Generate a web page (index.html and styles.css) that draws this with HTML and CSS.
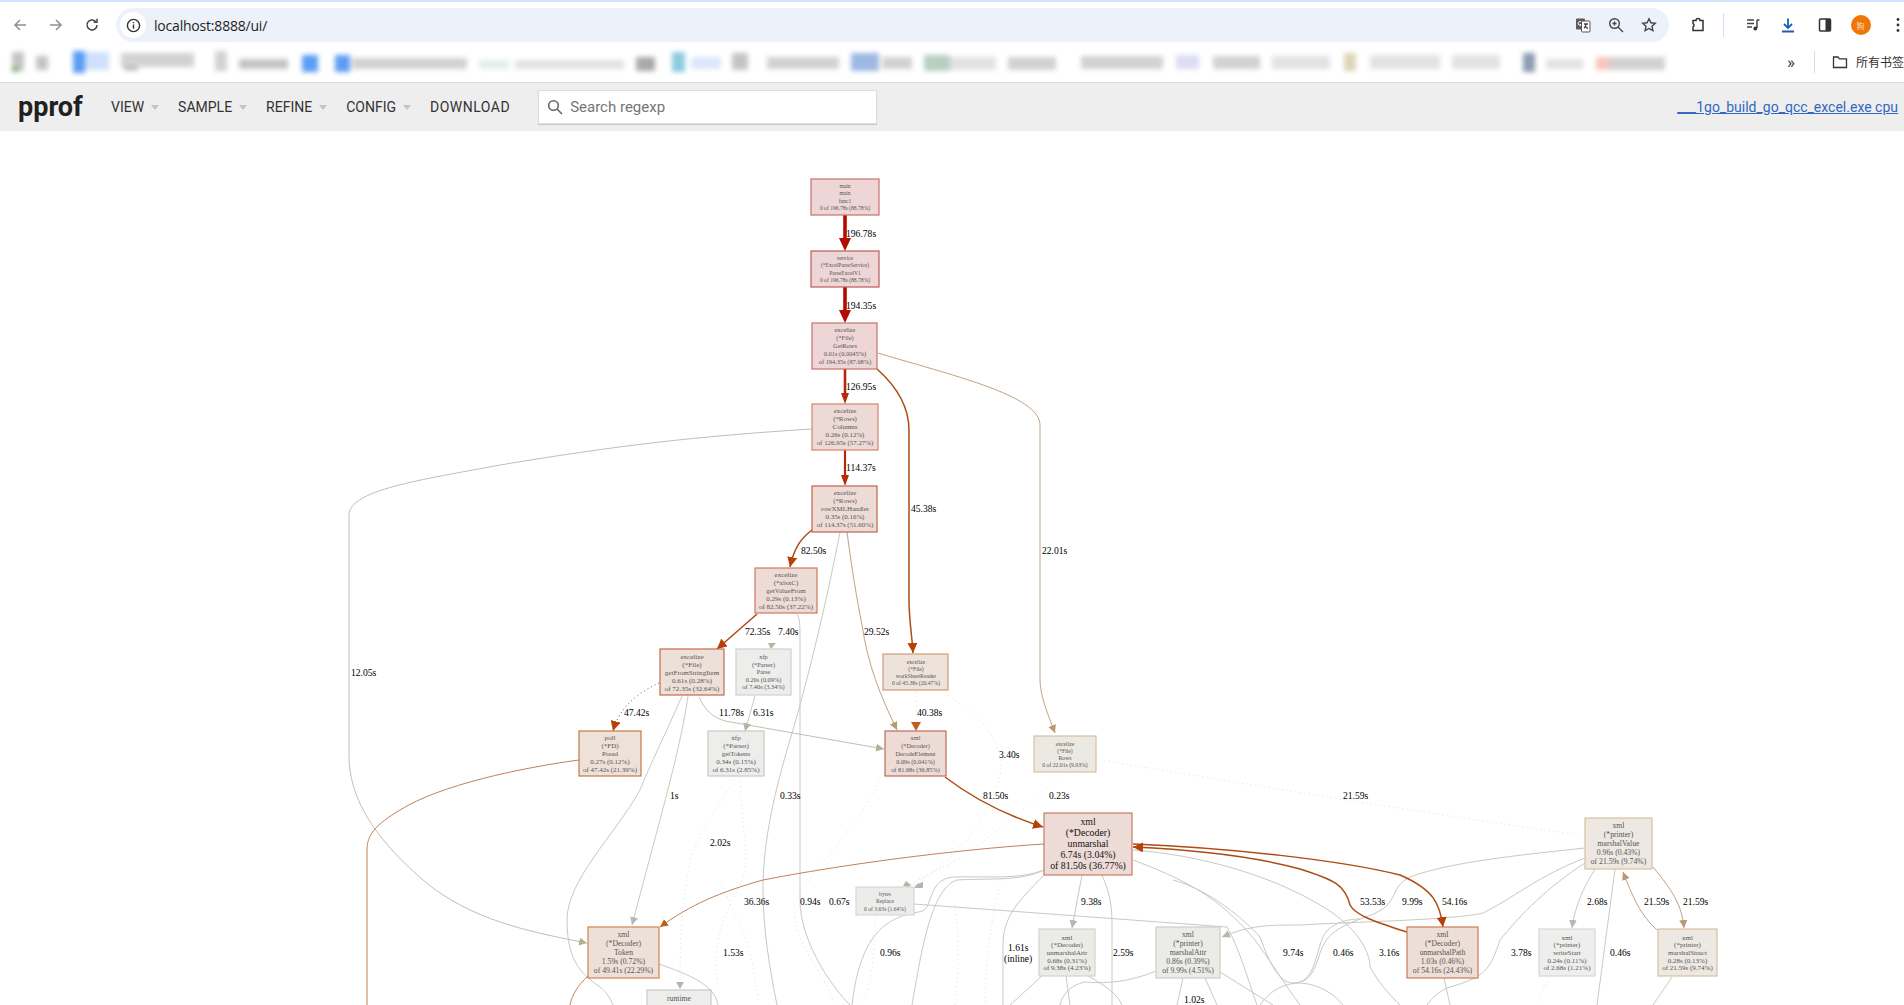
FILE: index.html
```html
<!DOCTYPE html>
<html lang="en">
<head>
<meta charset="utf-8">
<title>pprof</title>
<link rel="stylesheet" href="styles.css">
</head>
<body>
<div class="tabstrip"></div>
<div class="toolbar">
  <svg class="tb-icon dim" viewBox="0 0 16 16"><path d="M14 8H3M8 3 3 8l5 5"/></svg>
  <svg class="tb-icon dim" viewBox="0 0 16 16"><path d="M2 8h11M8 3l5 5-5 5"/></svg>
  <svg class="tb-icon" viewBox="0 0 16 16"><path d="M13 8a5 5 0 1 1-1.5-3.6M13 1.800v3.400H9.600"/></svg>
  <div class="omnibox">
    <span class="site-chip"><svg class="info" viewBox="0 0 16 16"><circle cx="8" cy="8" r="6.500"/><path d="M8 7v4.500M8 4.200v1.400"/></svg></span>
    <span class="url">localhost:8888/ui/</span>
    <span class="omni-actions">
      <svg class="omni-icon" viewBox="0 0 16 16"><rect class="solid" x="1" y="1.500" width="9" height="11" rx="1"/><path class="wh" d="M6.500 5a2 2 0 1 0 .4 2.500H5"/><rect class="outline" x="6.500" y="4" width="8.500" height="11" rx="1"/><path d="M9 7h4M11 7c0 2-1 3.500-2 4M10 9c.6 1 1.600 1.800 3 2.500"/></svg>
      <svg class="omni-icon" viewBox="0 0 16 16"><circle cx="6.500" cy="6.500" r="4.800"/><path d="m10 10 5 5M4.500 6.500h4M6.500 4.500v4"/></svg>
      <svg class="omni-icon" viewBox="0 0 16 16"><path d="m8 1.800 1.900 4 4.400.5-3.300 3 .9 4.400L8 11.500l-3.900 2.200.9-4.400-3.300-3 4.400-.5z"/></svg>
    </span>
  </div>
  <div class="tb-right">
    <svg class="tb-icon ext" viewBox="0 0 16 16"><path d="M3 3.500h3a2 2 0 0 1 4 0h3v10H3v-3.500a2 2 0 0 0 0-3.500z"/></svg>
    <span class="tb-divider"></span>
    <svg class="tb-icon media" viewBox="0 0 16 16"><path d="M2 3h7M2 6.500h7M2 10h5"/><path d="M12 3v8"/><circle class="solid" cx="10.300" cy="11.500" r="1.900"/><path d="M12 3h2.500"/></svg>
    <svg class="tb-icon dl" viewBox="0 0 16 16"><path d="M8 1.500v9M4 7l4 4 4-4M2 14.500h12"/></svg>
    <svg class="tb-icon panel" viewBox="0 0 16 16"><rect x="2.500" y="2" width="11" height="12" rx="1"/><rect class="solid" x="8.500" y="2" width="5" height="12"/></svg>
    <span class="avatar">狗</span>
    <svg class="tb-icon kebab" viewBox="0 0 16 16"><circle class="solid" cx="8" cy="2.500" r="1.400"/><circle class="solid" cx="8" cy="8" r="1.400"/><circle class="solid" cx="8" cy="13.500" r="1.400"/></svg>
  </div>
</div>
<div class="bookmarks">
  <svg class="bm-blur" viewBox="0 0 1680 30" aria-hidden="true">
    <g class="bm-filter">
      <rect class="g2" x="12" y="5" width="12" height="19"/><rect class="gn" x="12" y="20" width="6" height="5"/>
      <rect class="g2" x="36" y="9" width="12" height="14"/>
      <rect class="b1" x="73" y="4" width="12" height="22"/><rect class="b2" x="85" y="5" width="24" height="18"/>
      <rect class="g3" x="121" y="6" width="73" height="14"/><rect class="g1" x="124" y="20" width="14" height="3"/>
      <rect class="g3" x="215" y="4" width="12" height="20"/><rect class="g2" x="239" y="12" width="49" height="10"/>
      <rect class="b1" x="302" y="8" width="16" height="17"/><rect class="b1" x="335" y="8" width="15" height="17"/>
      <rect class="g3" x="352" y="11" width="115" height="11"/>
      <rect class="gp" x="479" y="13" width="30" height="9"/><rect class="g4" x="515" y="13" width="109" height="9"/>
      <rect class="g1" x="636" y="10" width="19" height="14"/>
      <rect class="tl" x="672" y="5" width="13" height="20"/><rect class="b3" x="691" y="10" width="30" height="12"/>
      <rect class="g2" x="732" y="6" width="16" height="17"/><rect class="g3" x="767" y="10" width="72" height="12"/>
      <rect class="bg" x="851" y="6" width="28" height="18"/><rect class="g3" x="882" y="10" width="30" height="12"/>
      <rect class="gs" x="924" y="8" width="26" height="16"/><rect class="g4" x="950" y="10" width="46" height="13"/>
      <rect class="g3" x="1008" y="10" width="48" height="13"/><rect class="g3" x="1081" y="9" width="82" height="13"/>
      <rect class="lv" x="1176" y="8" width="23" height="14"/><rect class="g3" x="1213" y="9" width="47" height="13"/>
      <rect class="g4" x="1272" y="9" width="58" height="13"/><rect class="bge" x="1344" y="6" width="12" height="18"/>
      <rect class="g4" x="1370" y="8" width="70" height="14"/><rect class="g4" x="1452" y="8" width="48" height="14"/>
      <rect class="bd" x="1523" y="6" width="12" height="19"/><rect class="g4" x="1546" y="12" width="37" height="10"/>
      <rect class="pk" x="1596" y="10" width="14" height="13"/><rect class="g3" x="1610" y="10" width="55" height="13"/>
    </g>
  </svg>
  <span class="chev">»</span>
  <span class="tb-divider"></span>
  <svg class="folder" viewBox="0 0 16 16"><path d="M1.500 3h4.500l1.500 1.800h7v8.700h-13z"/></svg>
  <span class="all-bm">所有书签</span>
</div>
<header class="pp-header">
  <span class="brand">pprof</span>
  <nav class="pp-nav">
    <span class="menu">VIEW<i class="caret"></i></span>
    <span class="menu">SAMPLE<i class="caret"></i></span>
    <span class="menu">REFINE<i class="caret"></i></span>
    <span class="menu">CONFIG<i class="caret"></i></span>
    <span class="menu wide">DOWNLOAD</span>
  </nav>
  <div class="search">
    <svg class="search-icon" viewBox="0 0 16 16"><circle cx="6.500" cy="6.500" r="4.800"/><path d="m10 10 5 5"/></svg>
    <span class="search-ph">Search regexp</span>
  </div>
  <a class="title-link">___1go_build_go_qcc_excel.exe cpu</a>
</header>
<main class="graph">
<svg class="graph-svg" viewBox="0 131 1904 874">
  <defs>
    <marker id="a-brown" markerUnits="userSpaceOnUse" markerWidth="11" markerHeight="10" refX="10" refY="5" orient="auto"><path class="mk-brown" d="M0 0 10 5 0 10z"/></marker>
    <marker id="a-orange" markerUnits="userSpaceOnUse" markerWidth="9" markerHeight="9" refX="8" refY="4" orient="auto"><path class="mk-orange" d="M0 0 8 4 0 8z"/></marker>
    <marker id="a-tan" markerUnits="userSpaceOnUse" markerWidth="9" markerHeight="9" refX="8" refY="4" orient="auto"><path class="mk-tan" d="M0 0 8 4 0 8z"/></marker>
    <marker id="a-khaki" markerUnits="userSpaceOnUse" markerWidth="9" markerHeight="9" refX="8" refY="4" orient="auto"><path class="mk-khaki" d="M0 0 8 4 0 8z"/></marker>
    <marker id="a-grey" markerUnits="userSpaceOnUse" markerWidth="9" markerHeight="9" refX="8" refY="4" orient="auto"><path class="mk-grey" d="M0 0 8 4 0 8z"/></marker>
  </defs>

  <!-- faint dotted edges -->
  <g class="e dots">
    <path d="M1100,760 C1250,785 1420,812 1578,835"/>
    <path d="M740,777 C742,830 750,860 743,877 C735,900 722,910 717,950 C715,965 716,975 718,985"/>
    <path d="M735,780 C715,810 695,840 690,863 C682,900 680,940 680,982"/>
    <path d="M948,695 C985,720 1005,745 1000,775 C990,830 930,880 905,888"/>
    <path d="M880,777 C860,830 800,880 795,905 C790,940 820,965 835,1005"/>
    <path d="M1060,775 C1030,805 1000,830 960,858 C930,875 915,880 910,886"/>
    <path d="M758,1000 C755,975 750,940 735,915 C730,905 725,890 720,880"/>
    <path d="M1550,977 C1545,985 1540,995 1537,1005"/>
    <path d="M880,895 C870,935 880,970 860,1005"/>
    <path d="M1000,885 C990,925 985,965 985,1005"/>
    <path d="M955,905 C960,940 958,975 955,1005"/>
    <path d="M916,692 V722"/>
  </g>

  <!-- grey edges -->
  <g class="e grey">
    <path d="M840,532 C825,610 805,690 790,740 C775,790 763,840 763,890 C763,930 770,970 777,1005"/>
    <path d="M797,614 C800,620 800,625 800,640 V900 C800,940 830,985 850,1005"/>
    <path d="M682,696 C665,735 650,765 640,790 C615,835 567,880 567,920 C567,965 585,975 597,985 C605,990 610,997 613,1005"/>
    <path marker-end="url(#a-grey)" d="M688,696 C680,750 665,800 632,925"/>
    <path d="M659,964 C690,975 715,985 718,1005"/>
    <path d="M1044,870 C1020,880 985,876 953,877 C925,880 935,912 918,912 C885,918 860,935 852,1005"/>
    <path d="M1044,870 C1020,882 985,878 957,880 C930,888 920,960 912,1005"/>
    <path d="M1044,875 C1020,900 1003,915 1003,945 V1005"/>
    <path d="M1102,875 C1108,890 1112,900 1112,925 V1005"/>
    <path d="M914,904 L1227,927 C1240,950 1248,980 1257,1005"/>
    <path d="M1133,860 C1200,885 1225,905 1255,940 C1270,960 1285,985 1300,1005"/>
    <path d="M1133,850 C1200,855 1270,875 1320,905 C1355,925 1370,950 1370,967 C1380,985 1390,995 1400,1005"/>
    <path d="M1173,880 C1210,890 1245,920 1260,937 C1270,965 1280,983 1293,983 C1315,983 1315,955 1323,937 C1330,922 1350,919 1360,919"/>
    <path d="M1585,848 C1520,855 1450,862 1410,877 C1385,890 1405,905 1360,919 C1330,930 1325,940 1320,953 C1315,970 1310,980 1300,982"/>
    <path marker-end="url(#a-grey)" d="M1585,858 C1540,875 1510,900 1483,913 C1455,920 1350,922 1300,925 C1270,925 1250,925 1222,937"/>
    <path d="M1585,863 C1550,885 1520,915 1500,940 C1490,970 1485,977 1450,987 C1440,990 1432,998 1427,1005"/>
    <path d="M1615,869 L1597,1005"/>
    <path marker-end="url(#a-grey)" d="M1595,869 C1585,885 1575,905 1572,928"/>
    <path d="M1672,977 L1653,1005"/>
    <path d="M1444,978 L1450,1005"/>
    <path d="M1042,976 L1010,1005"/>
    <path d="M1066,976 L1070,1005"/>
    <path d="M1088,976 C1105,985 1118,995 1122,1005"/>
    <path d="M1156,971 C1130,982 1105,984 1085,982 C1070,985 1062,995 1060,1005"/>
    <path d="M1183,978 L1177,1005"/>
    <path d="M1205,978 L1217,1005"/>
    <path d="M1220,972 L1273,1005"/>
    <path d="M1260,1005 C1270,990 1285,983 1300,983 C1320,984 1335,995 1343,1005"/>
    <path marker-end="url(#a-grey)" d="M1082,875 L1072,928"/>
    <path marker-end="url(#a-khaki)" d="M755,696 L745,731"/>
  </g>

  <!-- tan edges -->
  <g class="e khaki">
    <path marker-end="url(#a-khaki)" d="M812,429 C700,436 620,445 500,465 C420,480 349,490 349,515 V755 C349,790 365,830 423,880 C470,920 530,932 587,943"/>
    <path marker-end="url(#a-khaki)" d="M699,697 C705,710 712,717 725,721 L884,749"/>
  </g>
  <g class="e tan">
    <path marker-end="url(#a-tan)" d="M878,353 C950,375 1040,395 1040,425 V680 C1040,695 1048,715 1055,733"/>
    <path marker-end="url(#a-tan)" d="M847,532 C852,570 857,600 862,625 C868,665 880,695 897,730"/>
    <path marker-end="url(#a-tan)" d="M1657,930 C1640,915 1632,895 1623,872"/>
    <path marker-end="url(#a-tan)" d="M1653,867 C1672,890 1682,905 1684,928"/>
  </g>
  <g class="e copper">
    <path d="M579,760 C520,768 440,785 400,810 C375,825 367,835 367,850 V1005"/>
    <path d="M588,976 C578,985 572,995 570,1005"/>
    <path marker-end="url(#a-orange)" d="M1044,844 C950,850 840,865 763,880 C720,892 690,905 660,927"/>
  </g>

  <!-- strong edges -->
  <g class="e brown">
    <path marker-end="url(#a-brown)" d="M812,530 C800,539 794,549 790,567"/>
    <path marker-end="url(#a-brown)" d="M757,614 L717,649"/>
    <path marker-end="url(#a-brown)" d="M877,369 C895,385 909,405 909,430 V600 C909,620 912,635 913,653"/>
    <path marker-end="url(#a-brown)" d="M945,777 C975,800 1005,815 1043,827"/>
    <path marker-end="url(#a-brown)" d="M1133,844 C1230,848 1340,860 1400,875 C1435,890 1440,905 1443,927"/>
    <path marker-end="url(#a-brown)" d="M1407,932 C1375,922 1355,915 1350,905 C1345,885 1335,880 1300,869 C1260,858 1200,850 1133,847"/>
  </g>
  <g class="e brown-dots">
    <path marker-end="url(#a-brown)" d="M659,683 C640,692 620,705 613,731"/>
  </g>

  <path class="e-thick" d="M845,215 V239"/><polygon class="ah-red" points="839,238 851,238 845,251"/>
  <path class="e-thick" d="M845,287 V311"/><polygon class="ah-red" points="839,310 851,310 845,323"/>
  <path class="e-mid" d="M845,369 V394"/><polygon class="ah-red2" points="841,393 849,393 845,404"/>
  <path class="e-mid2" d="M845,450 V476"/><polygon class="ah-red2" points="841,475 849,475 845,486"/>
  <polygon class="ah-orange" points="911,722 921,722 916,731"/>
  <polygon class="ah-khaki" points="768,643 776,643 771,649"/>
  <polygon class="ah-grey" points="676,982 684,982 680,989"/>
  <polygon class="ah-grey" points="906,881 911,885 908,887 903,886"/>
  <polygon class="ah-grey" points="917,884 923,882 923,888 914,888"/>

  <!-- nodes -->
  <g class="node">
    <rect class="c-r1" x="811" y="179" width="68" height="36"/>
    <text class="f56"><tspan x="845" y="188">main</tspan><tspan x="845" y="195.300">main</tspan><tspan x="845" y="202.600">func1</tspan><tspan x="845" y="209.900">0 of 196.78s (88.78%)</tspan></text>
    <rect class="c-r2" x="811" y="251" width="68" height="36"/>
    <text class="f56"><tspan x="845" y="260">service</tspan><tspan x="845" y="267.300">(*ExcelParseService)</tspan><tspan x="845" y="274.600">ParseExcelV1</tspan><tspan x="845" y="281.900">0 of 196.78s (88.78%)</tspan></text>
    <rect class="c-r1" x="812" y="323" width="65" height="46"/>
    <text class="f64"><tspan x="845" y="332">excelize</tspan><tspan x="845" y="340">(*File)</tspan><tspan x="845" y="348">GetRows</tspan><tspan x="845" y="356">0.01s (0.0045%)</tspan><tspan x="845" y="364">of 194.35s (87.68%)</tspan></text>
    <rect class="c-r3" x="812" y="404" width="66" height="46"/>
    <text class="f69"><tspan x="845" y="413">excelize</tspan><tspan x="845" y="421">(*Rows)</tspan><tspan x="845" y="429">Columns</tspan><tspan x="845" y="437">0.26s (0.12%)</tspan><tspan x="845" y="445">of 126.95s (57.27%)</tspan></text>
    <rect class="c-r4" x="812" y="486" width="65" height="46"/>
    <text class="f69"><tspan x="845" y="495.400">excelize</tspan><tspan x="845" y="503.400">(*Rows)</tspan><tspan x="845" y="511.400">rowXMLHandler</tspan><tspan x="845" y="519.400">0.35s (0.16%)</tspan><tspan x="845" y="527.400">of 114.37s (51.60%)</tspan></text>
    <rect class="c-r5" x="755" y="568" width="62" height="45"/>
    <text class="f70"><tspan x="786" y="577">excelize</tspan><tspan x="786" y="585">(*xlsxC)</tspan><tspan x="786" y="593">getValueFrom</tspan><tspan x="786" y="601">0.29s (0.13%)</tspan><tspan x="786" y="609">of 82.50s (37.22%)</tspan></text>
    <rect class="c-r6" x="660" y="649" width="64" height="46"/>
    <text class="f71"><tspan x="692" y="658.500">excelize</tspan><tspan x="692" y="666.500">(*File)</tspan><tspan x="692" y="674.500">getFromStringItem</tspan><tspan x="692" y="682.500">0.61s (0.28%)</tspan><tspan x="692" y="690.500">of 72.35s (32.64%)</tspan></text>
    <rect class="c-g1" x="736" y="649" width="55" height="46"/>
    <text class="f63"><tspan x="763.500" y="659">xfp</tspan><tspan x="763.500" y="666.600">(*Parser)</tspan><tspan x="763.500" y="674.200">Parse</tspan><tspan x="763.500" y="681.800">0.20s (0.09%)</tspan><tspan x="763.500" y="689.400">of 7.40s (3.34%)</tspan></text>
    <rect class="c-o1" x="579" y="731" width="62" height="45"/>
    <text class="f70"><tspan x="610" y="740">poll</tspan><tspan x="610" y="748">(*FD)</tspan><tspan x="610" y="756">Pread</tspan><tspan x="610" y="764">0.27s (0.12%)</tspan><tspan x="610" y="772">of 47.42s (21.39%)</tspan></text>
    <rect class="c-g2" x="708" y="731" width="56" height="45"/>
    <text class="f70"><tspan x="736" y="740">xfp</tspan><tspan x="736" y="748">(*Parser)</tspan><tspan x="736" y="756">getTokens</tspan><tspan x="736" y="764">0.34s (0.15%)</tspan><tspan x="736" y="772">of 6.31s (2.85%)</tspan></text>
    <rect class="c-o2" x="883" y="654" width="65" height="36"/>
    <text class="f57"><tspan x="916" y="663.500">excelize</tspan><tspan x="916" y="670.500">(*File)</tspan><tspan x="916" y="678">workSheetReader</tspan><tspan x="916" y="685">0 of 45.38s (20.47%)</tspan></text>
    <rect class="c-r7" x="885" y="731" width="61" height="45"/>
    <text class="f63"><tspan x="915.500" y="740">xml</tspan><tspan x="915.500" y="748">(*Decoder)</tspan><tspan x="915.500" y="756">DecodeElement</tspan><tspan x="915.500" y="764">0.09s (0.041%)</tspan><tspan x="915.500" y="772">of 81.68s (36.85%)</tspan></text>
    <rect class="c-t1" x="1034" y="736" width="62" height="36"/>
    <text class="f57"><tspan x="1065" y="745.500">excelize</tspan><tspan x="1065" y="752.500">(*File)</tspan><tspan x="1065" y="759.500">Rows</tspan><tspan x="1065" y="766.500">0 of 22.01s (9.93%)</tspan></text>
    <rect class="c-r8" x="1044" y="813" width="88" height="62"/>
    <text class="f98"><tspan x="1088" y="825.400">xml</tspan><tspan x="1088" y="836.400">(*Decoder)</tspan><tspan x="1088" y="847.400">unmarshal</tspan><tspan x="1088" y="858.400">6.74s (3.04%)</tspan><tspan x="1088" y="869.400">of 81.50s (36.77%)</tspan></text>
    <rect class="c-g3" x="856" y="887" width="58" height="28"/>
    <text class="f56"><tspan x="885" y="895.500">bytes</tspan><tspan x="885" y="903">Replace</tspan><tspan x="885" y="910.500">0 of 3.63s (1.64%)</tspan></text>
    <rect class="c-g4" x="1039" y="929" width="56" height="47"/>
    <text class="f70"><tspan x="1067" y="939.500">xml</tspan><tspan x="1067" y="947.200">(*Decoder)</tspan><tspan x="1067" y="954.900">unmarshalAttr</tspan><tspan x="1067" y="962.600">0.68s (0.31%)</tspan><tspan x="1067" y="970.300">of 9.38s (4.23%)</tspan></text>
    <rect class="c-g5" x="1156" y="927" width="64" height="51"/>
    <text class="f77"><tspan x="1188" y="937">xml</tspan><tspan x="1188" y="946">(*printer)</tspan><tspan x="1188" y="955">marshalAttr</tspan><tspan x="1188" y="964">0.86s (0.39%)</tspan><tspan x="1188" y="973">of 9.99s (4.51%)</tspan></text>
    <rect class="c-t2" x="1585" y="818" width="67" height="51"/>
    <text class="f77"><tspan x="1618.500" y="828">xml</tspan><tspan x="1618.500" y="837">(*printer)</tspan><tspan x="1618.500" y="846">marshalValue</tspan><tspan x="1618.500" y="855">0.96s (0.43%)</tspan><tspan x="1618.500" y="864">of 21.59s (9.74%)</tspan></text>
    <rect class="c-r9" x="1407" y="927" width="71" height="51"/>
    <text class="f77"><tspan x="1442.500" y="937">xml</tspan><tspan x="1442.500" y="946">(*Decoder)</tspan><tspan x="1442.500" y="955">unmarshalPath</tspan><tspan x="1442.500" y="964">1.03s (0.46%)</tspan><tspan x="1442.500" y="973">of 54.16s (24.43%)</tspan></text>
    <rect class="c-g6" x="1539" y="929" width="56" height="47"/>
    <text class="f70"><tspan x="1567" y="939.500">xml</tspan><tspan x="1567" y="947.200">(*printer)</tspan><tspan x="1567" y="954.900">writeStart</tspan><tspan x="1567" y="962.600">0.24s (0.11%)</tspan><tspan x="1567" y="970.300">of 2.68s (1.21%)</tspan></text>
    <rect class="c-t2" x="1658" y="929" width="59" height="47"/>
    <text class="f70"><tspan x="1687.500" y="939.500">xml</tspan><tspan x="1687.500" y="947.200">(*printer)</tspan><tspan x="1687.500" y="954.900">marshalStruct</tspan><tspan x="1687.500" y="962.600">0.28s (0.13%)</tspan><tspan x="1687.500" y="970.300">of 21.59s (9.74%)</tspan></text>
    <rect class="c-o3" x="588" y="927" width="71" height="51"/>
    <text class="f77"><tspan x="623.500" y="937">xml</tspan><tspan x="623.500" y="946">(*Decoder)</tspan><tspan x="623.500" y="955">Token</tspan><tspan x="623.500" y="964">1.59s (0.72%)</tspan><tspan x="623.500" y="973">of 49.41s (22.29%)</tspan></text>
    <rect class="c-g2" x="647" y="990" width="64" height="30"/>
    <text class="f77"><tspan x="679" y="1001">runtime</tspan></text>
  </g>

  <!-- edge labels -->
  <g class="lbl">
    <text x="846" y="237">196.78s</text><text x="846" y="309">194.35s</text><text x="846" y="390">126.95s</text><text x="846" y="471">114.37s</text>
    <text x="911" y="512">45.38s</text><text x="801" y="554">82.50s</text><text x="1042" y="554">22.01s</text>
    <text x="745" y="635">72.35s</text><text x="778" y="635">7.40s</text><text x="864" y="635">29.52s</text>
    <text x="624" y="716">47.42s</text><text x="719" y="716">11.78s</text><text x="753" y="716">6.31s</text><text x="917" y="716">40.38s</text>
    <text x="351" y="676">12.05s</text><text x="999" y="758">3.40s</text>
    <text x="670" y="799">1s</text><text x="780" y="799">0.33s</text><text x="983" y="799">81.50s</text><text x="1049" y="799">0.23s</text><text x="1343" y="799">21.59s</text>
    <text x="710" y="846">2.02s</text>
    <text x="744" y="905">36.36s</text><text x="800" y="905">0.94s</text><text x="829" y="905">0.67s</text><text x="1081" y="905">9.38s</text><text x="1360" y="905">53.53s</text><text x="1402" y="905">9.99s</text><text x="1442" y="905">54.16s</text><text x="1587" y="905">2.68s</text><text x="1644" y="905">21.59s</text><text x="1683" y="905">21.59s</text>
    <text x="723" y="956">1.53s</text><text x="880" y="956">0.96s</text><text x="1008" y="951">1.61s</text><text x="1004" y="962">(inline)</text><text x="1113" y="956">2.59s</text><text x="1283" y="956">9.74s</text><text x="1333" y="956">0.46s</text><text x="1379" y="956">3.16s</text><text x="1511" y="956">3.78s</text><text x="1610" y="956">0.46s</text>
    <text x="1184" y="1003">1.02s</text>
  </g>
</svg>
</main>
</body>
</html>
```

FILE: styles.css
```css
html, body { margin: 0; padding: 0; height: 1005px; overflow: hidden; background: #fff; font-family: Roboto, "Noto Sans", sans-serif; color: #222; }
body { display: flex; flex-direction: column; }

.tabstrip { height: 2px; background: #d3e3fd; }
.toolbar { height: 44px; display: flex; align-items: center; padding-left: 12px; background: #fff; box-sizing: border-box; padding-top: 2px; }
.tb-icon { width: 16px; height: 16px; margin-right: 20px; fill: none; stroke: #444746; stroke-width: 1.500; flex: none; }
.tb-icon.dim { stroke: #8d9094; }
.omnibox { margin-left: -4px; width: 1553px; height: 34px; border-radius: 17px; background: #edf2fa; display: flex; align-items: center; flex: none; }
.site-chip { width: 26px; height: 26px; margin-left: 4px; border-radius: 50%; background: #fff; display: flex; align-items: center; justify-content: center; }
.info { width: 15px; height: 15px; fill: none; stroke: #333; stroke-width: 1.500; }
.url { margin-left: 8px; font-size: 14px; color: #1f1f1f; font-family: "Open Sans", sans-serif; letter-spacing: -0.200px; }
.omni-actions { margin-left: auto; margin-right: 12px; display: flex; gap: 17px; align-items: center; }
.omni-icon { width: 16px; height: 16px; fill: none; stroke: #444; stroke-width: 1.400; }
.omni-icon .solid { fill: #5a5a5a; stroke: none; }
.omni-icon .wh { stroke: #fff; stroke-width: 1; }
.omni-icon .outline { fill: #fff; stroke: #555; stroke-width: 1; }
.tb-right { display: flex; align-items: center; margin-left: 20.500px; flex: none; }
.tb-right .tb-icon { margin-right: 0; }
.ext { stroke: #333; }
.tb-divider { display: block; width: 1px; height: 24px; background: #cfe0f4; flex: none; }
.tb-right .tb-divider { margin: 0 21px 0 17px; }
.tb-right .media { margin-right: 19px; }
.tb-right .dl { margin-right: 21px; stroke: #1a5fb4; stroke-width: 1.800; }
.tb-right .panel { margin-right: 18px; stroke: #333; }
.media .solid, .panel .solid, .kebab .solid { fill: #333; stroke: none; }
.avatar { width: 20px; height: 20px; border-radius: 50%; background: #ef7607; color: #fde0c0; font: 8px "Noto Sans CJK SC", sans-serif; display: flex; align-items: center; justify-content: center; flex: none; margin-right: 19px; }
.tb-right .kebab { margin-right: 0; margin-left: 0; }

.bookmarks { height: 37px; display: flex; align-items: center; background: #fff; border-bottom: 1px solid #dadce0; box-sizing: border-box; padding-bottom: 5px; }
.bm-blur { width: 1680px; height: 30px; flex: none; }
.bm-filter { filter: blur(2.500px); }
.bm-blur .g1 { fill: #a9a9a9; } .bm-blur .g2 { fill: #c4c4c4; } .bm-blur .g3 { fill: #d2d2d2; } .bm-blur .g4 { fill: #e2e2e2; }
.bm-blur .gn { fill: #7db06a; } .bm-blur .b1 { fill: #5c9df5; } .bm-blur .b2 { fill: #cfe0fa; } .bm-blur .b3 { fill: #dbe8fb; }
.bm-blur .gp { fill: #dff0e8; } .bm-blur .tl { fill: #8ccbdf; } .bm-blur .bg { fill: #9db8e2; } .bm-blur .gs { fill: #b8cfc0; }
.bm-blur .lv { fill: #dcdcf5; } .bm-blur .bge { fill: #ddd5b8; } .bm-blur .bd { fill: #8b9db0; } .bm-blur .pk { fill: #f8c4c0; }
.chev { margin-left: 107px; width: 16px; font-size: 17px; color: #333; flex: none; }
.bookmarks .tb-divider { height: 22px; margin: 0 17px 0 11px; }
.folder { width: 16px; height: 16px; fill: none; stroke: #333; stroke-width: 1.300; flex: none; }
.all-bm { margin-left: 8px; font: 12px "Noto Sans CJK SC", sans-serif; color: #333; white-space: nowrap; }

.pp-header { height: 48px; flex: none; display: flex; align-items: center; background: #eee; padding-left: 18px; position: relative; }
.brand { font-size: 27px; font-weight: 700; color: #212121; width: 93px; flex: none; }
.pp-nav { display: flex; font-size: 14px; color: #333; flex: none; }
.menu { display: flex; align-items: center; margin-right: 19px; }
.menu.wide { letter-spacing: 0.500px; margin-right: 28px; }
.caret { display: block; width: 0; height: 0; margin-left: 7px; border: 4.500px solid transparent; border-top: 5px solid #c4c4c4; border-bottom: 0; }
.search { width: 339px; height: 34px; box-sizing: border-box; background: #fff; border: 1px solid #ddd; box-shadow: 0 1px 1px #ccc; display: flex; align-items: center; padding-left: 8px; flex: none; }
.search-icon { width: 16px; height: 16px; fill: none; stroke: #666; stroke-width: 1.600; }
.search-ph { margin-left: 7px; font-size: 15px; color: #757575; }
.title-link { margin-left: auto; margin-right: 6px; font-size: 14px; color: #3367c0; text-decoration: underline; white-space: nowrap; }

.graph { flex: 1; min-height: 0; background: #fff; overflow: hidden; }
.graph-svg { display: block; width: 1904px; height: 874px; }

.e path { fill: none; }
.dots path { stroke: #e0e0dc; stroke-width: 1; stroke-dasharray: 1 3.500; }
.grey path { stroke: #c8c8c4; stroke-width: 1; }
.khaki path { stroke: #c2bfae; stroke-width: 1; }
.tan path { stroke: #bfa284; stroke-width: 1; }
.copper path { stroke: #c08258; stroke-width: 1; }
.brown path { stroke: #ae4a12; stroke-width: 1.500; }
.brown-dots path { stroke: #7a5a44; stroke-width: 1; stroke-dasharray: 1 3; }
.e-thick { fill: none; stroke: #b20b00; stroke-width: 3.600; }
.e-mid { fill: none; stroke: #b22a0c; stroke-width: 2.600; }
.e-mid2 { fill: none; stroke: #b22a0c; stroke-width: 2.200; }
.ah-red { fill: #b20b00; }
.ah-red2 { fill: #b82c0a; }
.ah-orange { fill: #c4591e; }
.ah-khaki { fill: #b8b4a0; }
.ah-grey { fill: #b4b4b0; }
.mk-brown { fill: #b54008; }
.mk-orange { fill: #bf5f18; }
.mk-tan { fill: #b89a70; }
.mk-khaki { fill: #b5af96; }
.mk-grey { fill: #b6b6b2; }

.node text { font-family: "Liberation Serif", serif; text-anchor: middle; fill: #555; }
.f56 { font-size: 5.600px; } .f57 { font-size: 5.700px; } .f63 { font-size: 6.300px; } .f64 { font-size: 6.400px; }
.f69 { font-size: 6.900px; } .f70 { font-size: 7px; } .f71 { font-size: 7.100px; } .f77 { font-size: 7.700px; }
.node .f98 { font-size: 9.800px; fill: #111; }
.node rect { stroke-width: 1.200; }
.c-r1 { fill: #edd6d5; stroke: #c8706c; } .c-r2 { fill: #edd6d5; stroke: #b85a5a; }
.c-r3 { fill: #eddad6; stroke: #d4826e; } .c-r4 { fill: #eddcd6; stroke: #c4624a; }
.c-r5 { fill: #eddcd5; stroke: #d2775b; } .c-r6 { fill: #ede0d8; stroke: #c8684c; }
.c-r7 { fill: #eddcd6; stroke: #bd6a5a; } .c-r8 { fill: #eddbd7; stroke: #cc7a60; }
.c-r9 { fill: #edded6; stroke: #cc7a58; }
.c-o1 { fill: #ede1d8; stroke: #c47848; } .c-o2 { fill: #ede3da; stroke: #d09a78; } .c-o3 { fill: #ede0d8; stroke: #cf8452; }
.c-t1 { fill: #ece8e2; stroke: #d8bea4; } .c-t2 { fill: #ede8e2; stroke: #d8c0a0; }
.c-g1 { fill: #ededec; stroke: #d0d0cc; } .c-g2 { fill: #ededec; stroke: #c8c8c4; } .c-g3 { fill: #ececea; stroke: #d8d8d4; }
.c-g4 { fill: #ebebe8; stroke: #d4d4cc; } .c-g5 { fill: #ebebe7; stroke: #cfcfc7; } .c-g6 { fill: #eeeeed; stroke: #d8d8d8; }
.lbl text { font-family: "Liberation Serif", serif; font-size: 9.600px; fill: #000; }
```
